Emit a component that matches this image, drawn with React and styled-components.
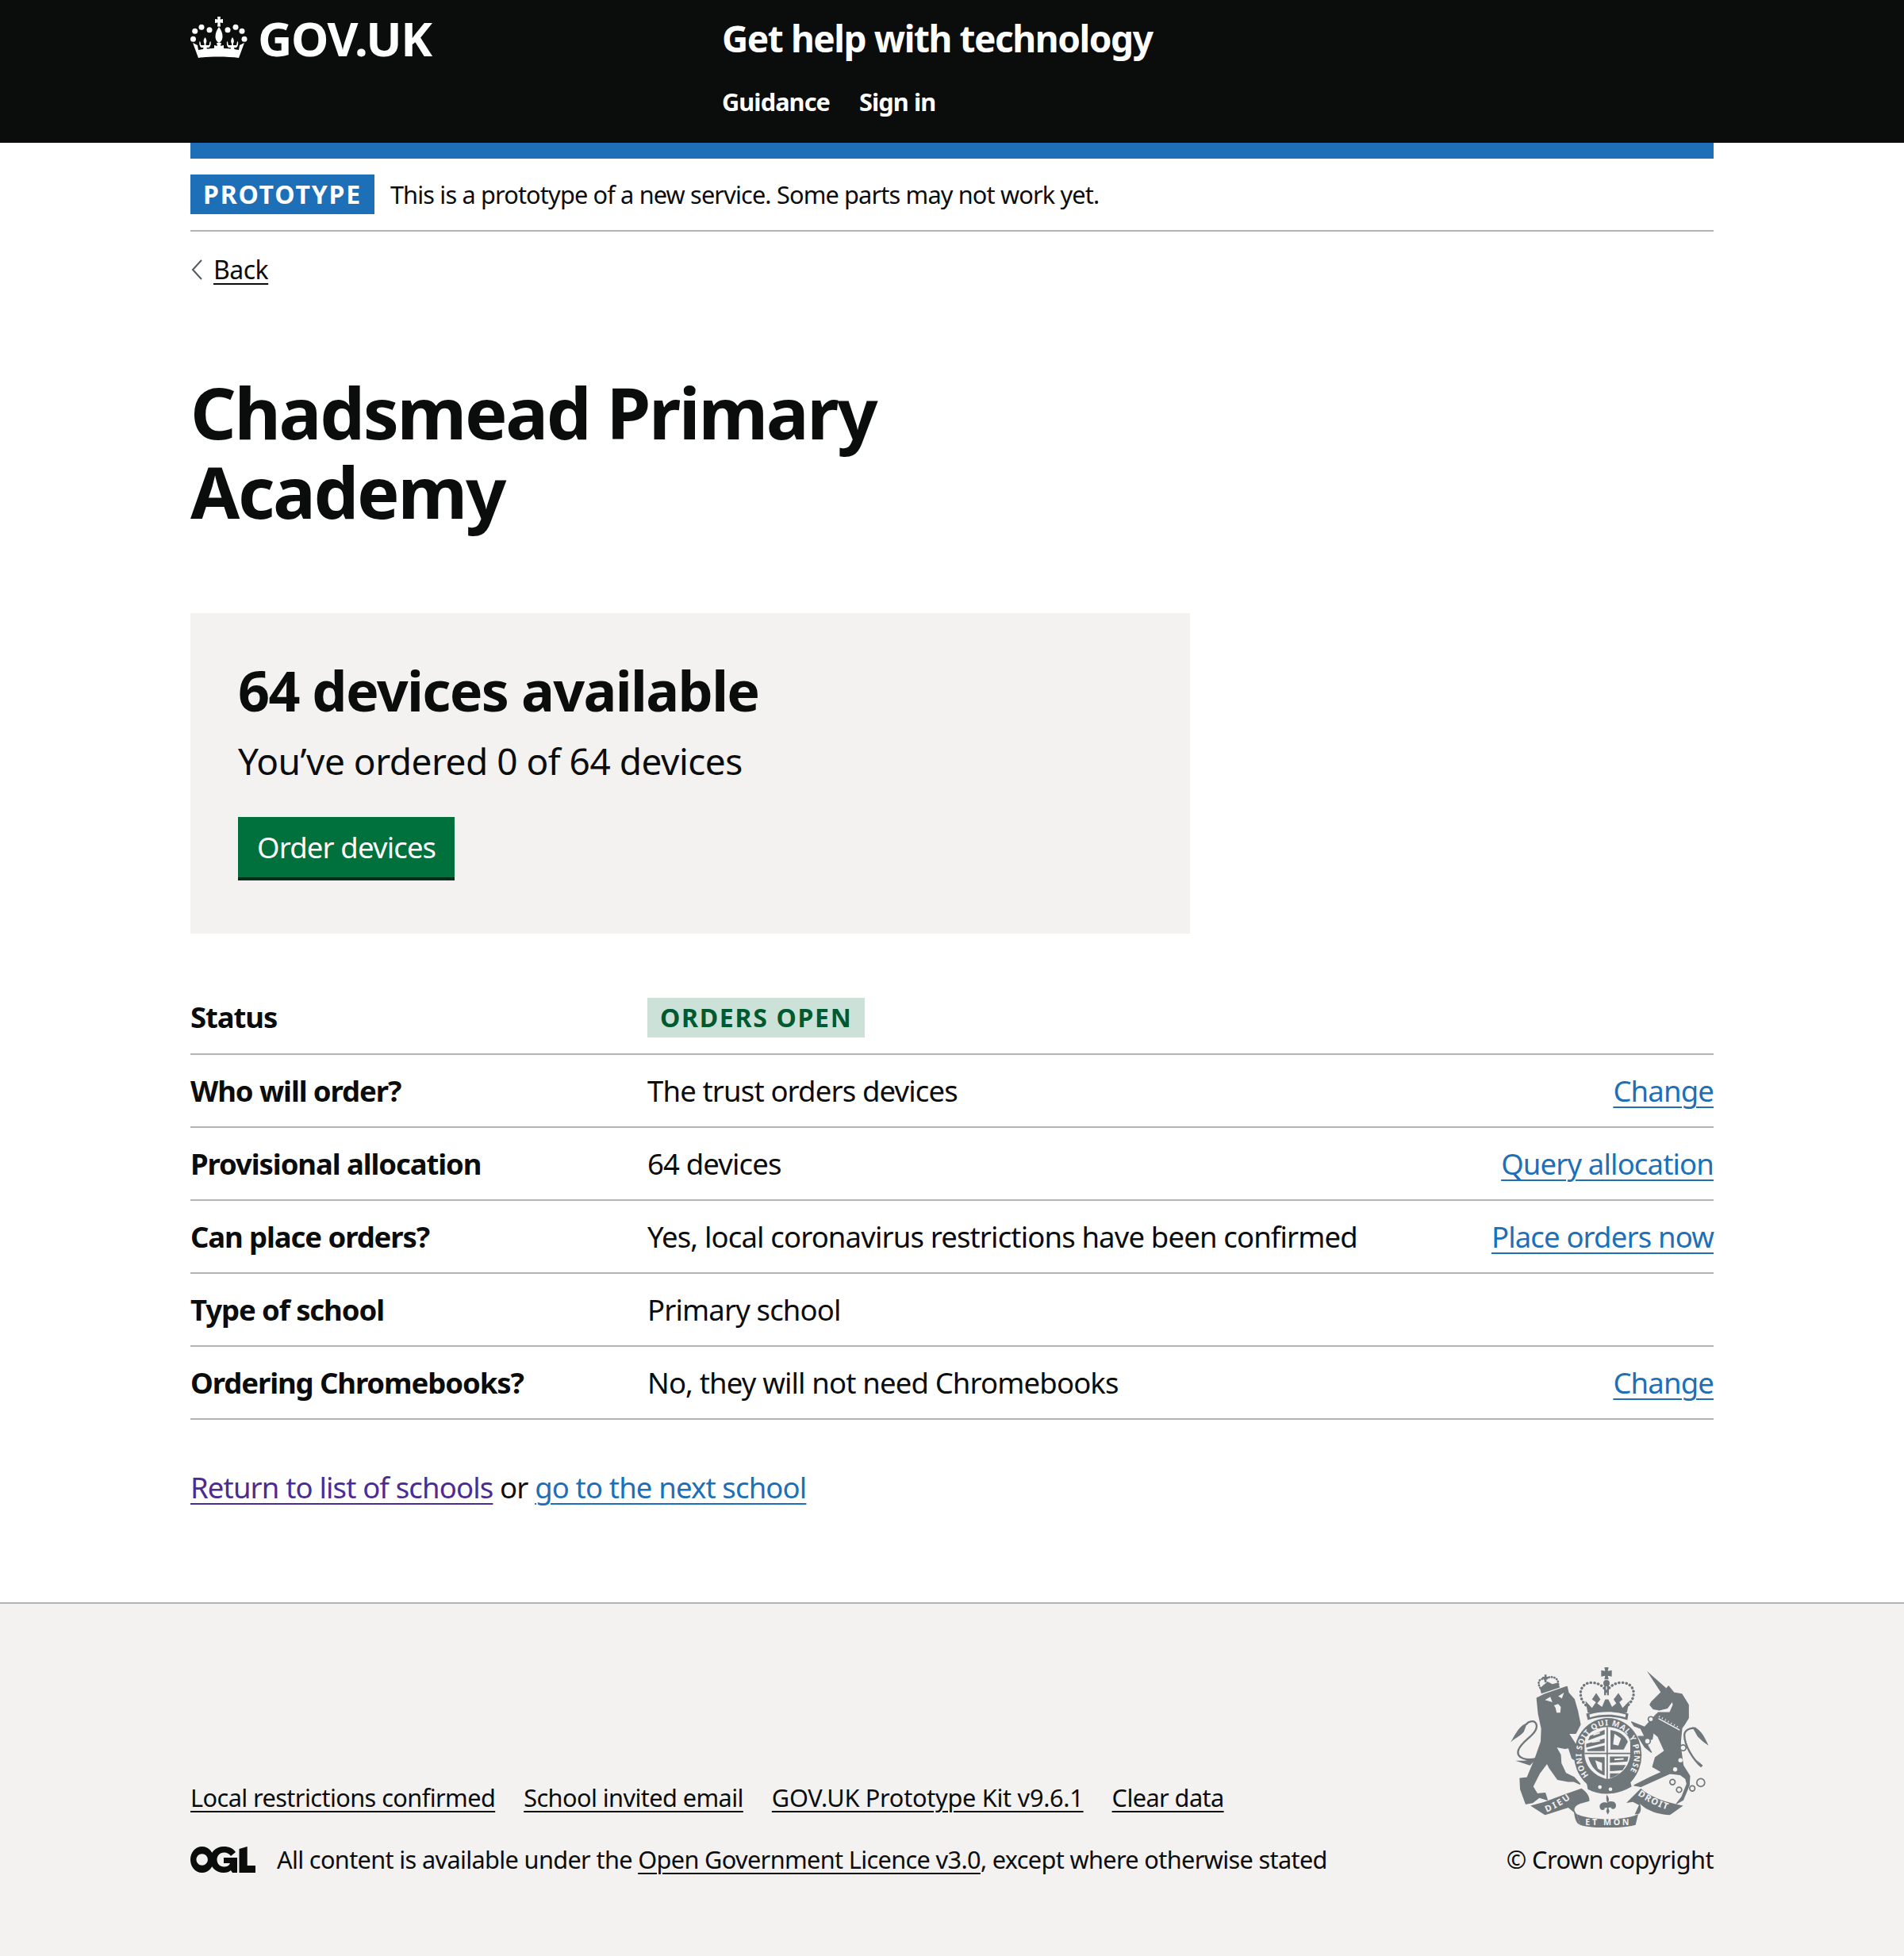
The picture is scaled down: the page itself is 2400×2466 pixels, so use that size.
import styled, { createGlobalStyle } from 'styled-components';

const GlobalStyle = createGlobalStyle`
  html, body { margin: 0; padding: 0; background: #fff; }
  body {
    font-family: "Noto Sans", "Liberation Sans", Arial, sans-serif;
    font-size: 36.5px;
    line-height: 50px;
    color: #0b0c0c;
  }
  * { box-sizing: border-box; }
`;

const Width = styled.div`
  width: 1920px;
  margin: 0 auto;
`;

const Header = styled.header`
  background: #0b0c0c;
  height: 180px;
  color: #fff;
`;

const HeaderInner = styled(Width)`
  display: flex;
  padding-top: 15px;
`;

const Logo = styled.a`
  width: 670px;
  display: flex;
  align-items: flex-start;
  gap: 13px;
  font-size: 60px;
  font-weight: 700;
  line-height: 66px;
  color: #fff;
  letter-spacing: -1.4px;
`;

const CrownIcon = styled.svg`
  width: 72px;
  height: 52px;
  margin-top: 6px;
  fill: #fff;
`;

const ServiceColumn = styled.div`
  display: flex;
  flex-direction: column;
`;

const ServiceName = styled.div`
  font-size: 46px;
  font-weight: 700;
  line-height: 66px;
  letter-spacing: -1.45px;
`;

const Nav = styled.nav`
  display: flex;
  gap: 37px;
  margin-top: 22px;
  font-size: 30.7px;
  font-weight: 700;
  line-height: 50px;
  letter-spacing: -0.9px;
`;

const BlueBar = styled(Width)`
  height: 20px;
  background: #1d70b8;
`;

const PhaseBanner = styled(Width)`
  display: flex;
  align-items: center;
  gap: 20px;
  height: 92px;
  border-bottom: 2px solid #b1b4b6;
`;

const Tag = styled.strong`
  display: inline-block;
  padding: 0 16px;
  background: ${({ $bg }) => $bg};
  color: ${({ $fg }) => $fg};
  font-size: 32px;
  font-weight: 700;
  line-height: 50px;
  letter-spacing: ${({ $tracking }) => $tracking || '1.7px'};
`;

const PhaseText = styled.span`
  font-size: 30.7px;
  letter-spacing: -0.84px;
`;

const BackLink = styled.a`
  display: inline-flex;
  align-items: center;
  gap: 13px;
  margin-top: 28px;
  font-size: 32px;
  line-height: 40px;
  letter-spacing: -0.5px;
  color: #0b0c0c;
`;

const BackText = styled.span`
  text-decoration: underline;
  text-underline-offset: 5px;
  text-decoration-thickness: 2px;
`;

const Chevron = styled.svg`
  width: 16px;
  height: 28px;
  fill: none;
  stroke: #505a5f;
  stroke-width: 2;
`;

const Main = styled(Width)`
  padding-top: 104px;
`;

const Title = styled.h1`
  margin: 0;
  width: 1000px;
  font-size: 90px;
  line-height: 100px;
  font-weight: 700;
  letter-spacing: -2.35px;
`;

const Panel = styled.section`
  width: 1260px;
  height: 404px;
  margin-top: 104px;
  padding: 53px 60px 0;
  background: #f3f2f1;
`;

const PanelHeading = styled.h2`
  margin: 0;
  font-size: 70px;
  line-height: 88px;
  font-weight: 700;
  letter-spacing: -1.65px;
`;

const PanelText = styled.p`
  margin: 0;
  padding-top: 15px;
  font-size: 46px;
  line-height: 60px;
  letter-spacing: -0.5px;
`;

const Button = styled.a`
  display: inline-block;
  margin-top: 41px;
  padding: 0 24px;
  height: 80px;
  background: #00703c;
  box-shadow: inset 0 -4px 0 #002d18;
  color: #fff;
  font-size: 36.5px;
  line-height: 76px;
  letter-spacing: -0.85px;
`;

const Rows = styled.dl`
  margin: 59px 0 0;
`;

const Row = styled.div`
  display: grid;
  grid-template-columns: 576px 1fr auto;
  align-items: center;
  height: ${({ $tall }) => ($tall ? '94px' : '92px')};
  border-bottom: 2px solid #b1b4b6;
`;

const Key = styled.dt`
  font-weight: 700;
  letter-spacing: -1.1px;
`;

const Value = styled.dd`
  margin: 0;
  letter-spacing: -0.85px;
`;

const Action = styled.a`
  color: #1d70b8;
  letter-spacing: -0.85px;
  text-decoration: underline;
  text-underline-offset: 6px;
  text-decoration-thickness: 2px;
`;

const BottomLine = styled.p`
  margin: 60px 0 0;
  letter-spacing: -0.85px;
`;

const ProseLink = styled.a`
  color: ${({ $visited }) => ($visited ? '#4c2c92' : '#1d70b8')};
  text-decoration: underline;
  text-underline-offset: 6px;
  text-decoration-thickness: 2px;
`;

const Footer = styled.footer`
  margin-top: 120px;
  height: 446px;
  background: #f3f2f1;
  border-top: 2px solid #b1b4b6;
`;

const FooterInner = styled(Width)`
  display: flex;
  justify-content: space-between;
  align-items: flex-end;
  padding-top: 79px;
`;

const FooterMeta = styled.div`
  display: flex;
  flex-direction: column;
  gap: 38px;
  font-size: 30.7px;
  line-height: 40px;
  letter-spacing: -0.65px;
`;

const FooterLinks = styled.div`
  display: flex;
  gap: 36px;
`;

const FooterLink = styled.a`
  color: #0b0c0c;
  letter-spacing: ${({ $tracking }) => $tracking || 'inherit'};
  text-decoration: underline;
  text-underline-offset: 5px;
  text-decoration-thickness: 2px;
`;

const LicenceRow = styled.div`
  display: flex;
  align-items: center;
  gap: 27px;
`;

const OglIcon = styled.svg`
  width: 82px;
  height: 33px;
  fill: #0b0c0c;
`;

const CrestColumn = styled.div`
  display: flex;
  flex-direction: column;
  align-items: flex-end;
  font-size: 30.7px;
  line-height: 40px;
  letter-spacing: -0.55px;
`;

const CrestIcon = styled.svg`
  width: 250px;
  height: 203px;
  margin-bottom: 20px;
  margin-right: 6px;
`;

const CrestText = styled.text`
  font-family: "Noto Sans", sans-serif;
  font-weight: 700;
  fill: #f3f2f1;
  letter-spacing: 0;
`;

function Crown() {
  const fleur = 'M0-8C2-5 2.500-3 1 0V2H5C6 0 5-2 7-3 7.500 1 7 3 5 5H2L3 9H-3L-2 5H-5C-7 3-7.500 1-7-3-5-2-6 0-5 2H-1V0C-2.500-3-2-5 0-8Z';
  return (
    <CrownIcon viewBox="0 0 72 52">
      <path d="M34 0h4l-.500 3.500 3.500-.500v5l-3.500-.500.500 5h-4l.500-5-3.500.500v-5l3.500.500z" />
      <path d="M36 13c3 4 4.500 8 4.500 12 0 4-2 7-4.500 8-2.500-1-4.500-4-4.500-8 0-4 1.500-8 4.500-12z" />
      <circle cx="14" cy="13.300" r="3.500" /><circle cx="24" cy="16.700" r="3.500" />
      <circle cx="47" cy="16.700" r="3.500" /><circle cx="57" cy="13.300" r="3.500" />
      <circle cx="5.700" cy="18.300" r="3.500" /><circle cx="65" cy="18.300" r="3.500" />
      <circle cx="3.500" cy="28.300" r="3.500" /><circle cx="68" cy="28.300" r="3.500" />
      <path d="M3 33l6 3 1 6c16-3 35-3 51 0l1-6 6-3-7 19c-14-2-37-2-51 0z" />
      <path d="M33 33h6l-1 4 4-1v6l-4-1 1 3h-6l1-3-4 1v-6l4 1z" />
      <path d={fleur} transform="translate(18.500 34)" />
      <path d={fleur} transform="translate(53 34)" />
    </CrownIcon>
  );
}

function Ogl() {
  return (
    <OglIcon viewBox="0 0 82 33">
      <path fillRule="evenodd" d="M14.700 0C23 0 29.400 7.300 29.400 16.500S23 33 14.700 33 0 25.700 0 16.500 6.400 0 14.700 0zm0 9.300c-4 0-7.200 3.200-7.200 7.200s3.200 7.200 7.200 7.200 7.200-3.200 7.200-7.200-3.200-7.200-7.200-7.200z" />
      <path d="M57 7c-3-4.500-8-7-15-7-10 0-17 7-17 16.500S32 33 42 33c4 0 7-1 9-3l2 3h6V14H42v7h8c-1 3-4 4.500-7.500 4.500-5.500 0-9-4-9-9s3.500-9 9-9c3.500 0 6.500 1.500 8.500 4.500z" />
      <path d="M61.500 3l10.200-3v24H82v9H61.500z" />
    </OglIcon>
  );
}

// crest is traced in the coordinates of a 3x crop, so the viewBox is a window on that
function Crest() {
  const ink = '#6f777b';
  const paper = '#f3f2f1';
  return (
    <CrestIcon viewBox="132 65 750 610" fill={ink}>
      {/* lion */}
      <path stroke={ink} strokeWidth="5" strokeLinejoin="round" d="M232 185L262 170 345 142 350 165 372 190 385 235 395 285 378 318 350 318 385 372 402 398 408 420 385 425 365 412 352 372 338 375 302 368 320 400 322 432 340 470 372 486 394 510 372 500 350 500 310 492 280 450 270 430 240 470 215 520 232 548 262 545 270 570 240 560 215 580 190 585 170 530 168 490 195 487 225 415 248 350 250 300 238 245z" />
      <path fill="none" stroke={ink} strokeWidth="7" d="M232 412C195 425 148 412 162 380 175 345 235 322 230 287 225 265 200 272 190 285" />
      <path d="M194 280C170 283 150 320 132 352 150 335 170 328 182 312zM232 412L205 440 150 422 185 422z" />
      <path fill={paper} d="M262 192L290 200 282 180zM312 178L334 164 326 186zM296 212L312 207 322 218 320 240 306 240 302 222z" />
      {/* lion crown */}
      <path d="M243 148L248 168 318 145 312 126 290 132 272 122 255 136z" />
      <path fill="none" stroke={ink} strokeWidth="8" strokeDasharray="1 9" strokeLinecap="round" d="M244 146C228 120 248 106 264 114 282 96 316 106 312 134" />
      <path d="M260 96h8v8h8v7h-8v14h-8v-14h-8v-7h8z" />
      {/* royal crown */}
      <path d="M487 68h16l-3 14 15-3v24l-15-3 3 14h-16l3-14-15 3V79l15 3z" />
      <circle cx="495" cy="128" r="12" />
      <path d="M486 136h7v38h-7zM497 136h7v38h-7z" />
      <path fill="none" stroke={ink} strokeWidth="10" strokeDasharray="1 13" strokeLinecap="round" d="M428 220C380 190 390 125 440 126 470 128 490 145 495 165 500 145 525 125 555 126 610 130 610 190 566 220" />
      <path d="M415 195L440 222 455 200 440 190 456 166 472 190 460 205 478 218 490 190 502 190 516 218 532 205 522 190 540 166 556 190 544 200 556 222 582 195 572 240H424z" />
      <path d="M418 244C470 226 530 226 578 244L574 268C530 252 470 252 424 268z" />
      <path fill={paper} d="M430 247C475 234 525 234 568 247L566 258C525 244 475 244 432 258z" />
      {/* garter */}
      <ellipse cx="500" cy="400" rx="128" ry="140" />
      <path fill={paper} d="M412 350C418 318 455 296 498 294 542 296 578 318 585 350V395C585 440 550 480 498 492 445 480 412 440 412 395z" />
      <path d="M495 294h5v198h-5zM412 392h173v5H412z" />
      <path d="M432 328L488 305V322L425 345zM418 358L488 338V354L418 372zM420 380L488 364V386H424zM510 306C540 308 565 325 576 350L560 380H510zM426 408H488V478C458 468 436 445 426 408zM508 406H578L574 425 508 430zM508 438H568L556 458 508 462zM508 470H546L520 484 508 488z" />
      <path fill={paper} d="M445 322L470 314V319L445 327zM525 320L550 338 540 365 520 360zM452 420L478 430 478 462 462 452zM440 350L470 344V349L440 354zM525 414L560 412 560 418 525 420z" />
      <defs>
        <path id="garter-arc" d="M428 478A100 112 0 1 1 572 478" />
        <path id="dieu-arc" d="M268 618Q330 592 375 552" />
        <path id="droit-arc" d="M612 552Q670 592 738 612" />
      </defs>
      <CrestText fontSize="30">
        <textPath href="#garter-arc" textLength="480">HONI SOIT QUI MAL Y PENSE</textPath>
      </CrestText>
      <path d="M420 505C470 540 530 545 585 500L590 520C530 555 470 555 424 530z" />
      <circle cx="470" cy="522" r="7" fill={paper} /><circle cx="510" cy="530" r="7" fill={paper} />
      {/* unicorn */}
      <path d="M648 82L722 148 702 165z" />
      <path stroke={ink} strokeWidth="4" strokeLinejoin="round" d="M702 163L665 200 660 210 672 225 695 230 725 222 745 195 748 210 735 240 690 240 685 250 775 305 790 285 805 260 805 210 780 170 750 165 730 140 722 150z" />
      <path stroke={ink} strokeWidth="4" strokeLinejoin="round" d="M685 245L640 295 590 275 600 290 625 300 640 330 615 330 640 370 665 390 640 345 668 340 672 315 690 330 715 385 680 410 670 445 705 465 660 485 600 515 625 520 680 495 735 470 775 475 795 490 800 510 780 560 760 585 785 570 808 515 810 480 785 440 775 370 775 350 780 300z" />
      <path fill="none" stroke={paper} strokeWidth="4" d="M692 262L772 306" />
      <path fill="none" stroke={paper} strokeWidth="7" strokeDasharray="3 10" d="M694 254L772 298" />
      <path fill="none" stroke={ink} strokeWidth="7" d="M855 445C825 420 790 365 790 325 790 305 815 295 835 300" />
      <path d="M820 295C850 295 870 340 882 365 860 350 850 340 840 330zM855 445L835 418 860 440z" />
      <g fill="none" stroke={ink} strokeWidth="5">
        <circle cx="663" cy="265" r="10" fill={paper} /><circle cx="650" cy="348" r="11" fill={paper} />
        <circle cx="785" cy="373" r="11" fill={paper} />
        <circle cx="745" cy="503" r="10" /><circle cx="770" cy="532" r="10" /><circle cx="820" cy="527" r="10" /><circle cx="852" cy="505" r="15" />
      </g>
      <circle cx="775" cy="420" r="8" fill={paper} /><circle cx="755" cy="455" r="8" fill={paper} />
      {/* motto ribbon */}
      <path d="M207 592L260 578 340 548 400 527C420 540 432 558 430 575L395 585C372 595 366 608 383 625L395 665C380 660 375 640 372 618L350 600 262 628z" />
      <path d="M383 625C440 650 560 650 615 625L605 665C550 680 440 680 395 665z" />
      <path d="M570 582L625 527C660 560 720 580 785 592L735 628C680 625 640 605 622 585 628 605 625 618 615 625L602 625 618 590 595 578z" />
      <path d="M495 550c12 14 10 22 6 28 8-4 30-4 30 14 0 12-14 18-20 8l5-2-14 2 4 14-6 12-6-12 4-14-14 2 5 2c-6 10-20 4-20-8 0-18 22-18 30-14-4-6-6-14-4-28z" />
      <CrestText fontSize="34">
        <textPath href="#dieu-arc" textLength="105">DIEU</textPath>
      </CrestText>
      <CrestText fontSize="34">
        <textPath href="#droit-arc" textLength="125">DROIT</textPath>
      </CrestText>
      <CrestText x="415" y="666" fontSize="32" textLength="165">ET MON</CrestText>
    </CrestIcon>
  );
}

export default function App() {
  return (
    <>
      <GlobalStyle />
      <Header>
        <HeaderInner>
          <Logo>
            <Crown />
            GOV.UK
          </Logo>
          <ServiceColumn>
            <ServiceName>Get help with technology</ServiceName>
            <Nav>
              <span>Guidance</span>
              <span>Sign in</span>
            </Nav>
          </ServiceColumn>
        </HeaderInner>
      </Header>
      <BlueBar />
      <PhaseBanner>
        <Tag $bg="#1d70b8" $fg="#fff" $tracking="1.8px">PROTOTYPE</Tag>
        <PhaseText>This is a prototype of a new service. Some parts may not work yet.</PhaseText>
      </PhaseBanner>
      <Width>
        <BackLink>
          <Chevron viewBox="0 0 16 28"><path d="M14 2L3 14l11 12" /></Chevron>
          <BackText>Back</BackText>
        </BackLink>
      </Width>
      <Main>
        <Title>Chadsmead Primary Academy</Title>
        <Panel>
          <PanelHeading>64 devices available</PanelHeading>
          <PanelText>You’ve ordered 0 of 64 devices</PanelText>
          <Button>Order devices</Button>
        </Panel>
        <Rows>
          <Row $tall>
            <Key>Status</Key>
            <Value><Tag $bg="#cce2d8" $fg="#005a30">ORDERS OPEN</Tag></Value>
          </Row>
          <Row>
            <Key>Who will order?</Key>
            <Value>The trust orders devices</Value>
            <Action>Change</Action>
          </Row>
          <Row>
            <Key>Provisional allocation</Key>
            <Value>64 devices</Value>
            <Action>Query allocation</Action>
          </Row>
          <Row>
            <Key>Can place orders?</Key>
            <Value>Yes, local coronavirus restrictions have been confirmed</Value>
            <Action>Place orders now</Action>
          </Row>
          <Row>
            <Key>Type of school</Key>
            <Value>Primary school</Value>
          </Row>
          <Row>
            <Key>Ordering Chromebooks?</Key>
            <Value>No, they will not need Chromebooks</Value>
            <Action>Change</Action>
          </Row>
        </Rows>
        <BottomLine>
          <ProseLink $visited>Return to list of schools</ProseLink> or <ProseLink>go to the next school</ProseLink>
        </BottomLine>
      </Main>
      <Footer>
        <FooterInner>
          <FooterMeta>
            <FooterLinks>
              <FooterLink $tracking="-0.58px">Local restrictions confirmed</FooterLink>
              <FooterLink $tracking="-0.58px">School invited email</FooterLink>
              <FooterLink $tracking="-0.28px">GOV.UK Prototype Kit v9.6.1</FooterLink>
              <FooterLink $tracking="-0.58px">Clear data</FooterLink>
            </FooterLinks>
            <LicenceRow>
              <Ogl />
              <span>All content is available under the <FooterLink>Open Government Licence v3.0</FooterLink>, except where otherwise stated</span>
            </LicenceRow>
          </FooterMeta>
          <CrestColumn>
            <Crest />
            <span>© Crown copyright</span>
          </CrestColumn>
        </FooterInner>
      </Footer>
    </>
  );
}
